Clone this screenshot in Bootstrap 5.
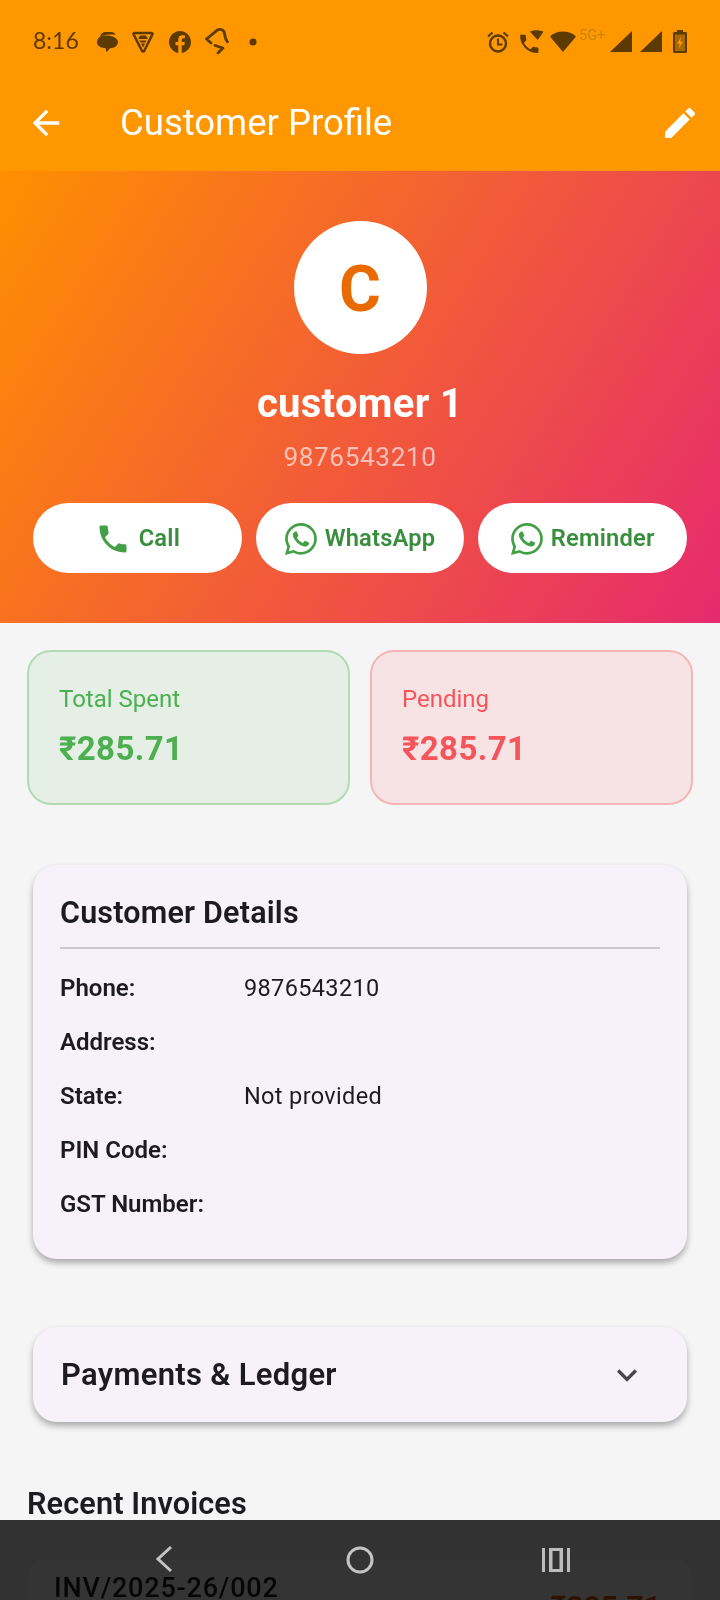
<!DOCTYPE html>
<html lang="en">
<head>
<meta charset="utf-8">
<title>Customer Profile</title>
<link href="https://cdn.jsdelivr.net/npm/bootstrap@5.3.0/dist/css/bootstrap.min.css" rel="stylesheet">
<style>
html,body{margin:0;height:1600px;overflow:hidden;background:#f5f5f5}
body{font-family:Roboto,"Liberation Sans",sans-serif;color:#1c1b1f}
.screen{position:relative;width:720px;height:1600px;overflow:hidden;background:#f5f5f5}
.appbar{background:#ff9800;height:171px;color:#fff}
.statusline{height:83px;padding:0 33px 0 33px;color:#5c3a00}
.statusline svg{display:block;flex:none}
.clock{font-family:Lato,Roboto,sans-serif;font-size:23px;line-height:1;width:40px;white-space:nowrap;margin-top:-2px}
.fiveg{font-size:14.5px;line-height:1;color:#c88608;width:27px;margin-top:-11px;margin-left:3px;margin-right:4px}
.toolbar{height:80px;padding:0 20px 0 26px}
.pagetitle{font-size:36.5px;font-weight:400;line-height:1;margin:0 0 0 54px}
.hero{height:452px;background:linear-gradient(122deg,#ff8f00,#e62a6e);padding-top:50px;color:#fff}
.avatar-disc{width:133px;height:133px;background:#fff;color:#e86a00;font-size:64px;font-weight:700;line-height:1;padding-top:4px}
.custname{font-size:40px;font-weight:700;line-height:44px;margin:28px 0 0;letter-spacing:.3px}
.custphone{font-size:26.2px;line-height:30px;margin-top:16px;letter-spacing:.6px;color:rgba(255,255,255,.62)}
.actions{padding:0 33px;margin-top:31px;gap:14px}
.pillbtn{flex:1 1 0;height:70px;background:#fff;border:0;border-radius:35px;color:#388e3c;font-size:23.7px;font-weight:600;gap:8px;padding:2px 0 0;--bs-btn-hover-bg:#fff;--bs-btn-hover-color:#388e3c}
.pillbtn span{letter-spacing:.2px}
.statsrow{padding:27px 27px 0;gap:20px}
.statbox{flex:1 1 0;height:155px;border-radius:24px;border:2px solid;padding:33px 30px}
.statbox.ok{background:#e5efe6;border-color:#b3d9b5;color:#4caf50}
.statbox.due{background:#f8e3e4;border-color:#f5b5b7;color:#f4555a}
.statlabel{font-size:24px;line-height:28px}
.statvalue{font-size:33px;font-weight:700;line-height:40px;margin-top:16px;letter-spacing:.4px}
.sheet{margin:0 33px;background:#f7f2fa;border:0;border-radius:24px;box-shadow:0 4px 6px rgba(0,0,0,.3),0 0 2px rgba(0,0,0,.03)}
.details{margin-top:60px;height:394px;padding:26px 27px 0}
.sheettitle{font-size:30.5px;font-weight:600;line-height:44px;margin:0;letter-spacing:.2px}
.rule{height:2px;background:#cbc6d0;margin:12px 0 19px}
.inforow{height:54px;font-size:23.5px;line-height:40px;letter-spacing:.35px}
.inforow b{width:184px;font-weight:600;letter-spacing:0;flex:none;font-size:24px}
.ledger{margin-top:68px;height:95px;padding:0 28px}
.ledgertitle{font-size:31px;font-weight:600;letter-spacing:.3px;line-height:1;margin:0}
.sectiontitle{font-size:30.7px;font-weight:600;line-height:36px;margin:64px 27px 0;letter-spacing:.1px}
.invcard{margin:36px 27px 0;height:200px;background:#fff;border:1px solid #eee;border-radius:16px;padding:11px 27px 0}
.invno{font-size:27px;font-weight:500;line-height:36px;letter-spacing:.8px;margin-left:-1px}
.invamt{font-size:30px;font-weight:700;color:#e65100;line-height:36px;margin-top:19px;margin-right:4px}
.navshade{position:absolute;left:0;right:0;bottom:0;height:80px;background:#343434;mix-blend-mode:multiply}
.navkeys{position:absolute;left:0;right:0;bottom:0;height:80px}
.navkeys svg{position:absolute}
</style>
</head>
<body>
<div class="screen">
  <header class="appbar">
    <div class="statusline d-flex align-items-center">
      <span class="clock">8:16</span>
      <svg style="margin-left:23px" width="22" height="22" viewBox="0 0 22 22"><path d="M4 6C4.500 2.800 7 1 10 1h5c2.500 0 4 1 4.500 3C17 3.500 9 3 4 6z" fill="currentColor"/><path d="M1 11c0-3.800 3.500-6.500 9.500-6.500S22 7.200 22 11s-3.500 6-8 6.200l-3.500 4-1-4.300C4.500 17.300 1 14.800 1 11z" fill="currentColor"/></svg>
      <svg style="margin-left:14px" width="22" height="22" viewBox="0 0 22 22"><path d="M2.500 2h17c.8 0 1.200.7.900 1.400L12.300 19.800c-.5.900-1.900.9-2.400 0L1.600 3.400C1.300 2.700 1.700 2 2.500 2z" fill="none" stroke="currentColor" stroke-width="2.500" stroke-linejoin="round"/><path d="M6.500 7l1.500-2.500h6L15.500 7v1h-9zM7.500 9.500h7l-1 2h-5zM9 12.500h4L11 16.500z" fill="currentColor"/></svg>
      <svg style="margin-left:15px" width="22" height="22" viewBox="0 0 16 16"><path d="M16 8.049c0-4.446-3.582-8.050-8-8.050C3.580 0-.002 3.603-.002 8.050c0 4.017 2.926 7.347 6.750 7.951v-5.625h-2.030V8.050H6.750V6.275c0-2.017 1.195-3.131 3.022-3.131.876 0 1.791.157 1.791.157v1.980h-1.009c-.993 0-1.303.621-1.303 1.258v1.510h2.218l-.354 2.326H9.250V16c3.824-.604 6.750-3.934 6.750-7.951z" fill="currentColor"/></svg>
      <svg style="margin-left:14px" width="24" height="27" viewBox="0 0 24 27" fill="none" stroke="currentColor" stroke-width="2.800" stroke-linecap="round" stroke-linejoin="round"><path d="M6 15 1.500 11 12 2.300c3-1.800 7-.5 7.500 3 .3 3 .8 6 3 8.500"/><path d="M10 17.500 18 20l-5 5"/></svg>
      <svg style="margin-left:20px" width="8" height="8" viewBox="0 0 8 8"><circle cx="4" cy="4" r="3.500" fill="currentColor"/></svg>
      <svg class="ms-auto" width="22" height="22" viewBox="0 0 22 22"><circle cx="11" cy="12.500" r="8" fill="none" stroke="currentColor" stroke-width="2.400"/><path d="M10 7.500h2v5h3.500v2H10z" fill="currentColor"/><path d="M1 5.500 5.500 1.500M21 5.500 16.500 1.500" stroke="currentColor" stroke-width="2.200" fill="none"/></svg>
      <svg style="margin-left:10px" width="25" height="23" viewBox="0 0 25 23"><path d="M5.300 8.200c1.100 2.200 2.900 4 5.100 5.100l1.700-1.700c.2-.2.500-.3.800-.2.900.3 1.800.5 2.800.5.400 0 .8.300.8.800v2.700c0 .4-.4.800-.8.800C8.400 16.200 2.400 10.200 2.400 3 2.400 2.500 2.800 2.200 3.200 2.200H6c.4 0 .8.300.8.800 0 1 .1 1.900.4 2.800.1.300 0 .6-.2.800L5.300 8.200z" fill="currentColor" transform="translate(-2 2) scale(1.300)"/><path d="M11 1.800C14.500-.2 20-.2 24.500 1.800L18.700 10z" fill="currentColor"/></svg>
      <svg style="margin-left:6px" width="26" height="21" viewBox="0 0 26 21"><path d="M0 5.500C3.500 2 8 .5 13 .5s9.500 1.500 13 5L13 21z" fill="currentColor"/></svg>
      <span class="fiveg">5G+</span>
      <svg width="22" height="21" viewBox="0 0 22 21"><path d="M22 0v21H0z" fill="currentColor"/></svg>
      <svg style="margin-left:8px" width="22" height="21" viewBox="0 0 22 21"><path d="M22 0v21H0z" fill="currentColor"/></svg>
      <svg style="margin-left:11px" width="14" height="23" viewBox="0 0 14 23"><path d="M4 0h6v2h2.500c.8 0 1.500.7 1.500 1.500v18c0 .8-.7 1.500-1.500 1.500h-11C.7 23 0 22.300 0 21.500v-18C0 2.700.7 2 1.500 2H4z" fill="currentColor"/><path d="M2 4.500h10v16.500H2z" fill="#a86700"/><path d="M8 7 4.200 13.500h2.500L6 18.500l3.800-6.700H7.200z" fill="#ff9800"/></svg>
    </div>
    <div class="toolbar d-flex align-items-center justify-content-between">
      <div class="d-flex align-items-center">
        <svg width="40" height="40" viewBox="0 0 24 24"><path d="M20 11H7.830l5.590-5.590L12 4l-8 8 8 8 1.410-1.410L7.830 13H20v-2z" fill="#fff"/></svg>
        <h1 class="pagetitle">Customer Profile</h1>
      </div>
      <svg width="40" height="40" viewBox="0 0 24 24"><path d="M3 17.250V21h3.750L17.810 9.940l-3.750-3.750L3 17.250zM20.710 7.040c.39-.39.39-1.020 0-1.410l-2.340-2.340c-.39-.39-1.020-.39-1.410 0l-1.830 1.830 3.750 3.750 1.830-1.830z" fill="#fff"/></svg>
    </div>
  </header>

  <section class="hero text-center">
    <div class="avatar-disc rounded-circle d-flex align-items-center justify-content-center mx-auto">C</div>
    <h2 class="custname">customer 1</h2>
    <div class="custphone">9876543210</div>
    <div class="actions d-flex">
      <button type="button" class="btn pillbtn d-flex align-items-center justify-content-center">
        <svg width="36" height="36" viewBox="0 0 24 24"><path d="M6.620 10.790c1.440 2.830 3.760 5.140 6.590 6.590l2.200-2.200c.27-.27.670-.36 1.020-.24 1.120.37 2.330.57 3.570.57.550 0 1 .45 1 1V20c0 .55-.45 1-1 1-9.390 0-17-7.610-17-17 0-.55.45-1 1-1h3.500c.55 0 1 .45 1 1 0 1.250.2 2.450.57 3.570.11.350.03.740-.25 1.020l-2.200 2.200z" fill="#43a047"/></svg>
        <span>Call</span>
      </button>
      <button type="button" class="btn pillbtn d-flex align-items-center justify-content-center">
        <svg width="32" height="32" viewBox="0 0 16 16"><path d="M13.601 2.326A7.854 7.854 0 0 0 7.994 0C3.627 0 .068 3.558.064 7.926c0 1.399.366 2.760 1.057 3.965L0 16l4.204-1.102a7.933 7.933 0 0 0 3.790.965h.004c4.368 0 7.926-3.558 7.930-7.930A7.898 7.898 0 0 0 13.600 2.326zM7.994 14.521a6.573 6.573 0 0 1-3.356-.920l-.240-.144-2.494.654.666-2.433-.156-.251a6.560 6.560 0 0 1-1.007-3.505c0-3.626 2.957-6.584 6.591-6.584a6.560 6.560 0 0 1 4.660 1.931 6.557 6.557 0 0 1 1.928 4.660c-.004 3.639-2.961 6.592-6.592 6.592zm3.615-4.934c-.197-.099-1.170-.578-1.353-.646-.182-.065-.315-.099-.445.099-.133.197-.513.646-.627.775-.114.133-.232.148-.430.050-.197-.100-.836-.308-1.592-.985-.590-.525-.985-1.175-1.103-1.372-.114-.198-.011-.304.088-.403.087-.088.197-.232.296-.346.100-.114.133-.198.198-.330.065-.134.034-.248-.015-.347-.050-.099-.445-1.076-.612-1.470-.160-.389-.323-.335-.445-.340-.114-.007-.247-.007-.380-.007a.729.729 0 0 0-.529.247c-.182.198-.691.677-.691 1.654 0 .977.710 1.916.810 2.049.098.133 1.394 2.132 3.383 2.992.470.205.840.326 1.129.418.475.152.904.129 1.246.080.380-.058 1.171-.480 1.338-.943.164-.464.164-.860.114-.943-.049-.084-.182-.133-.380-.232z" fill="#43a047"/></svg>
        <span>WhatsApp</span>
      </button>
      <button type="button" class="btn pillbtn d-flex align-items-center justify-content-center">
        <svg width="32" height="32" viewBox="0 0 16 16"><path d="M13.601 2.326A7.854 7.854 0 0 0 7.994 0C3.627 0 .068 3.558.064 7.926c0 1.399.366 2.760 1.057 3.965L0 16l4.204-1.102a7.933 7.933 0 0 0 3.790.965h.004c4.368 0 7.926-3.558 7.930-7.930A7.898 7.898 0 0 0 13.600 2.326zM7.994 14.521a6.573 6.573 0 0 1-3.356-.920l-.240-.144-2.494.654.666-2.433-.156-.251a6.560 6.560 0 0 1-1.007-3.505c0-3.626 2.957-6.584 6.591-6.584a6.560 6.560 0 0 1 4.660 1.931 6.557 6.557 0 0 1 1.928 4.660c-.004 3.639-2.961 6.592-6.592 6.592zm3.615-4.934c-.197-.099-1.170-.578-1.353-.646-.182-.065-.315-.099-.445.099-.133.197-.513.646-.627.775-.114.133-.232.148-.430.050-.197-.100-.836-.308-1.592-.985-.590-.525-.985-1.175-1.103-1.372-.114-.198-.011-.304.088-.403.087-.088.197-.232.296-.346.100-.114.133-.198.198-.330.065-.134.034-.248-.015-.347-.050-.099-.445-1.076-.612-1.470-.160-.389-.323-.335-.445-.340-.114-.007-.247-.007-.380-.007a.729.729 0 0 0-.529.247c-.182.198-.691.677-.691 1.654 0 .977.710 1.916.810 2.049.098.133 1.394 2.132 3.383 2.992.470.205.840.326 1.129.418.475.152.904.129 1.246.080.380-.058 1.171-.480 1.338-.943.164-.464.164-.860.114-.943-.049-.084-.182-.133-.380-.232z" fill="#43a047"/></svg>
        <span>Reminder</span>
      </button>
    </div>
  </section>

  <section class="statsrow d-flex">
    <div class="statbox ok">
      <div class="statlabel">Total Spent</div>
      <div class="statvalue">₹285.71</div>
    </div>
    <div class="statbox due">
      <div class="statlabel">Pending</div>
      <div class="statvalue">₹285.71</div>
    </div>
  </section>

  <section class="card sheet details">
    <h3 class="sheettitle">Customer Details</h3>
    <div class="rule"></div>
    <div class="inforow d-flex"><b>Phone:</b><span>9876543210</span></div>
    <div class="inforow d-flex"><b>Address:</b><span></span></div>
    <div class="inforow d-flex"><b>State:</b><span>Not provided</span></div>
    <div class="inforow d-flex"><b>PIN Code:</b><span></span></div>
    <div class="inforow d-flex"><b>GST Number:</b><span></span></div>
  </section>

  <section class="card sheet ledger d-flex flex-row align-items-center justify-content-between">
    <h3 class="ledgertitle">Payments &amp; Ledger</h3>
    <svg style="margin-right:12px" width="40" height="40" viewBox="0 0 24 24"><path d="M16.590 8.590 12 13.170 7.410 8.590 6 10l6 6 6-6z" fill="#49454f"/></svg>
  </section>

  <h3 class="sectiontitle">Recent Invoices</h3>
  <div class="invcard d-flex justify-content-between align-items-start">
    <div class="invno">INV/2025-26/002</div>
    <div class="invamt">₹285.71</div>
  </div>

  <div class="navshade"></div>
  <nav class="navkeys" aria-label="System navigation">
    <svg style="left:153px;top:25px" width="20" height="28" viewBox="0 0 20 28"><path d="M18 2 5 14l13 12" fill="none" stroke="#c4c4c4" stroke-width="3"/></svg>
    <svg style="left:346px;top:26px" width="28" height="28" viewBox="0 0 28 28"><circle cx="14" cy="14" r="12" fill="none" stroke="#c4c4c4" stroke-width="3"/></svg>
    <svg style="left:542px;top:27px" width="28" height="26" viewBox="0 0 28 26" fill="#bdbdbd"><path d="M0 1h3v24H0zM25 1h3v24h-3zM7 1h14v24H7zm3.500 3v18h7V4z"/></svg>
  </nav>
</div>
<script src="https://cdn.jsdelivr.net/npm/bootstrap@5.3.0/dist/js/bootstrap.bundle.min.js"></script>
</body>
</html>
